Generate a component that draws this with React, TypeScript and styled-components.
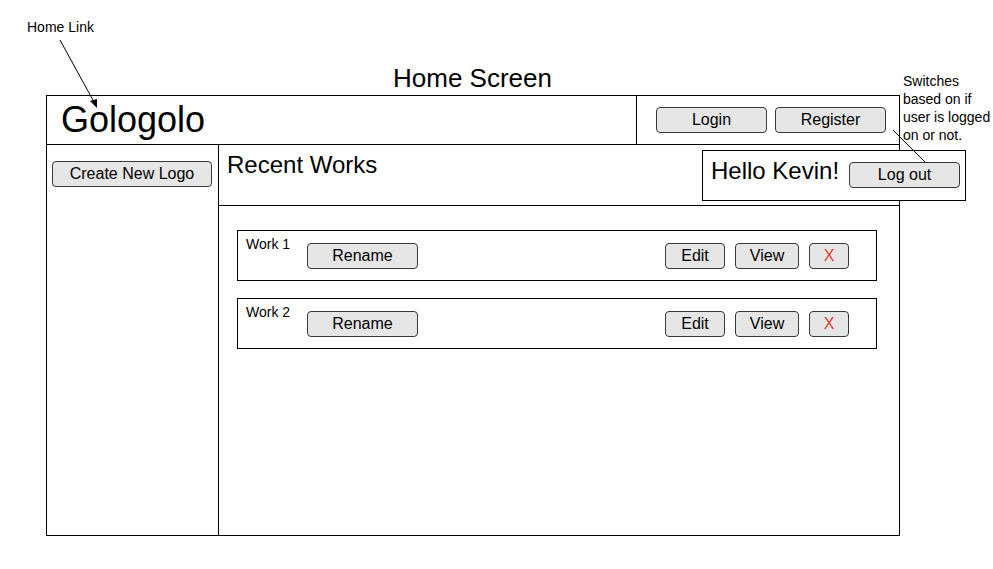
import React from "react";
import styled, { createGlobalStyle } from "styled-components";

const GlobalStyle = createGlobalStyle`
  html, body {
    margin: 0;
    padding: 0;
    background: #fff;
  }
  body {
    font-family: "Liberation Sans", Arial, sans-serif;
    color: #000;
  }
  * {
    box-sizing: border-box;
  }
`;

const Canvas = styled.div`
  position: relative;
  width: 993px;
  height: 569px;
  overflow: hidden;
  padding-top: 62px;
`;

const Title = styled.div`
  width: 945px;
  text-align: center;
  font-size: 26px;
  line-height: 32px;
  height: 33px;
`;

const Frame = styled.div`
  margin-left: 46px;
  width: 854px;
  height: 441px;
  border: 1px solid #000;
  display: flex;
  flex-direction: column;
`;

const Header = styled.div`
  display: flex;
  height: 49px;
  border-bottom: 1px solid #000;
`;

const Brand = styled.div`
  width: 590px;
  border-right: 1px solid #000;
  display: flex;
  align-items: center;
  padding-left: 14px;
  font-size: 36px;
`;

const AuthBar = styled.div`
  flex: 1;
  display: flex;
  gap: 8px;
  padding: 11px 0 0 19px;
`;

const Button = styled.button<{ $w: number; $danger?: boolean }>`
  width: ${(p) => p.$w}px;
  height: 26px;
  background: #e6e6e6;
  border: 1px solid #36393d;
  border-radius: 4px;
  font-family: "Liberation Sans", Arial, sans-serif;
  font-size: 16px;
  color: ${(p) => (p.$danger ? "#e0412f" : "#000")};
  padding: 0;
  display: flex;
  align-items: center;
  justify-content: center;
  flex-shrink: 0;
`;

const Body = styled.div`
  flex: 1;
  display: flex;
`;

const Sidebar = styled.div`
  width: 172px;
  border-right: 1px solid #000;
  padding: 16px 0 0 5px;
`;

const Main = styled.div`
  flex: 1;
  display: flex;
  flex-direction: column;
`;

const MainHeader = styled.div`
  height: 61px;
  border-bottom: 1px solid #000;
  padding: 6px 0 0 8px;
  font-size: 24px;
`;

const WorkList = styled.div`
  display: flex;
  flex-direction: column;
  gap: 17px;
  padding: 24px 0 0 18px;
`;

const WorkRow = styled.div`
  width: 640px;
  height: 51px;
  border: 1px solid #000;
  display: flex;
  align-items: flex-start;
  padding: 12px 27px 0 8px;
`;

const WorkLabel = styled.div`
  width: 61px;
  font-size: 14px;
  line-height: 16px;
  margin-top: -7px;
`;

const RowActions = styled.div`
  margin-left: auto;
  display: flex;
  gap: 10px;
`;

const HelloBox = styled.div`
  position: absolute;
  left: 702px;
  top: 150px;
  width: 264px;
  height: 51px;
  border: 1px solid #000;
  background: #fff;
  display: flex;
  align-items: flex-start;
  padding: 6px 0 0 8px;
  gap: 10px;
  font-size: 24px;
  line-height: 28px;

  ${Button} {
    margin-top: 5px;
  }
`;

const Note = styled.div<{ $x: number; $y: number }>`
  position: absolute;
  left: ${(p) => p.$x}px;
  top: ${(p) => p.$y}px;
  font-size: 14px;
  line-height: 18px;
`;

const Arrows = styled.svg`
  position: absolute;
  left: 0;
  top: 0;
  pointer-events: none;
`;

const works = ["Work 1", "Work 2"];

export default function App() {
  return (
    <>
      <GlobalStyle />
      <Canvas>
        <Title>Home Screen</Title>
        <Frame>
          <Header>
            <Brand>Gologolo</Brand>
            <AuthBar>
              <Button $w={111}>Login</Button>
              <Button $w={111}>Register</Button>
            </AuthBar>
          </Header>
          <Body>
            <Sidebar>
              <Button $w={160}>Create New Logo</Button>
            </Sidebar>
            <Main>
              <MainHeader>Recent Works</MainHeader>
              <WorkList>
                {works.map((w) => (
                  <WorkRow key={w}>
                    <WorkLabel>{w}</WorkLabel>
                    <Button $w={111}>Rename</Button>
                    <RowActions>
                      <Button $w={60}>Edit</Button>
                      <Button $w={64}>View</Button>
                      <Button $w={40} $danger>
                        X
                      </Button>
                    </RowActions>
                  </WorkRow>
                ))}
              </WorkList>
            </Main>
          </Body>
        </Frame>

        <HelloBox>
          Hello Kevin!
          <Button $w={111}>Log out</Button>
        </HelloBox>

        <Note $x={27} $y={18}>Home Link</Note>
        <Note $x={903} $y={72}>
          Switches
          <br />
          based on if
          <br />
          user is logged
          <br />
          on or not.
        </Note>

        <Arrows width="993" height="569" viewBox="0 0 993 569">
          <line x1="60" y1="40" x2="94" y2="102" stroke="#000" strokeWidth="1" />
          <polygon points="97,108 90,101 97,99" fill="#000" />
          <line x1="893" y1="130" x2="925" y2="162" stroke="#000" strokeWidth="1" />
        </Arrows>
      </Canvas>
    </>
  );
}
